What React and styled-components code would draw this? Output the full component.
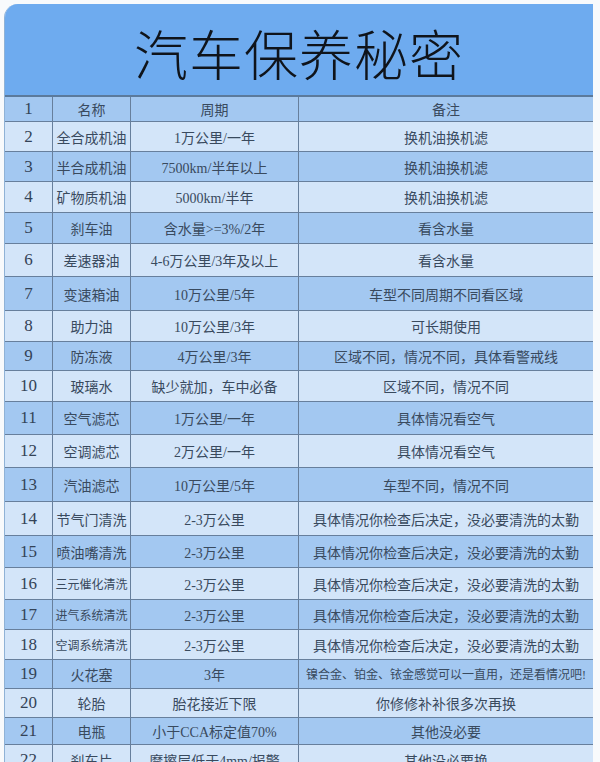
import React from 'react';
import styled, { createGlobalStyle } from 'styled-components';

const GlobalStyle = createGlobalStyle`
    html, body {
        margin: 0;
        padding: 0;
        background: #f8fafc;
    }
    * {
        box-sizing: border-box;
    }
`

const Page = styled.div`
    width: 600px;
    height: 762px;
    overflow: hidden;
    padding: 4px 7px 0 4px;
    background: #f8fafc;
`

const Sheet = styled.div`
    width: 100%;
    border-top-left-radius: 14px;
    overflow: hidden;
    background: #d3e5f9;
    border-left: 1px solid #8fb2d6;
`

const TitleBar = styled.div`
    height: 93px;
    display: flex;
    align-items: center;
    justify-content: center;
    background: #6eabef;
    border-bottom: 2px solid #5b7a9c;
    padding-top: 6px;
    font-family: "Noto Sans CJK SC", sans-serif;
    font-size: 54px;
    font-weight: 300;
    letter-spacing: 1px;
    color: #0f141b;
`

const Row = styled.div`
    display: grid;
    grid-template-columns: 48px 78px 168px 1fr;
    height: ${ props => props.h }px;
    background: ${ props => props.dark ? '#a3c8f1' : '#d3e5f9' };
    border-bottom: 1.5px solid #677f9c;
`

const Cell = styled.div`
    display: flex;
    align-items: center;
    justify-content: center;
    border-right: 1.5px solid #677f9c;
    font-family: "Liberation Serif", "Noto Sans CJK SC", serif;
    font-size: ${ props => props.size ? props.size : '14px' };
    color: #394a5e;
    white-space: nowrap;
    overflow: hidden;
    &:last-child {
        border-right: none;
    }
`

const Num = styled(Cell)`
    font-size: 17px;
    color: #334357;
`

const rows = [
    ['1', '名称', '周期', '备注', 25],
    ['2', '全合成机油', '1万公里/一年', '换机油换机滤', 30],
    ['3', '半合成机油', '7500km/半年以上', '换机油换机滤', 30],
    ['4', '矿物质机油', '5000km/半年', '换机油换机滤', 31],
    ['5', '刹车油', '含水量>=3%/2年', '看含水量', 31],
    ['6', '差速器油', '4-6万公里/3年及以上', '看含水量', 33],
    ['7', '变速箱油', '10万公里/5年', '车型不同周期不同看区域', 34],
    ['8', '助力油', '10万公里/3年', '可长期使用', 31],
    ['9', '防冻液', '4万公里/3年', '区域不同，情况不同，具体看警戒线', 29],
    ['10', '玻璃水', '缺少就加，车中必备', '区域不同，情况不同', 31],
    ['11', '空气滤芯', '1万公里/一年', '具体情况看空气', 33],
    ['12', '空调滤芯', '2万公里/一年', '具体情况看空气', 33],
    ['13', '汽油滤芯', '10万公里/5年', '车型不同，情况不同', 34],
    ['14', '节气门清洗', '2-3万公里', '具体情况你检查后决定，没必要清洗的太勤', 34],
    ['15', '喷油嘴清洗', '2-3万公里', '具体情况你检查后决定，没必要清洗的太勤', 32],
    ['16', '三元催化清洗', '2-3万公里', '具体情况你检查后决定，没必要清洗的太勤', 32],
    ['17', '进气系统清洗', '2-3万公里', '具体情况你检查后决定，没必要清洗的太勤', 30],
    ['18', '空调系统清洗', '2-3万公里', '具体情况你检查后决定，没必要清洗的太勤', 30],
    ['19', '火花塞', '3年', '镍合金、铂金、铱金感觉可以一直用，还是看情况吧!', 29],
    ['20', '轮胎', '胎花接近下限', '你修修补补很多次再换', 29],
    ['21', '电瓶', '小于CCA标定值70%', '其他没必要', 27],
    ['22', '刹车片', '摩擦层低于4mm/报警', '其他没必要换', 30],
]

const nameSize = name => name.length >= 6 ? '12px' : '14px'
const noteSize = note => note.length > 20 ? '12px' : '14px'

function App() {
    return (
        <>
            <GlobalStyle />
            <Page>
                <Sheet>
                    <TitleBar>汽车保养秘密</TitleBar>
                    {
                        rows.map(([num, name, period, note, h], i) => (
                            <Row key={num} h={h} dark={i % 2 === 0}>
                                <Num>{num}</Num>
                                <Cell size={nameSize(name)}>{name}</Cell>
                                <Cell>{period}</Cell>
                                <Cell size={noteSize(note)}>{note}</Cell>
                            </Row>
                        ))
                    }
                </Sheet>
            </Page>
        </>
    )
}

export default App;
